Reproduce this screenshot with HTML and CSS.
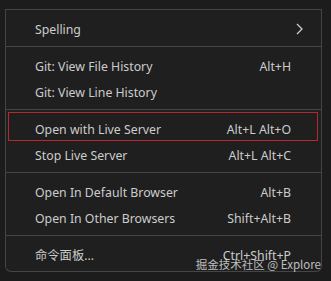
FILE: index.html
```html
<!DOCTYPE html>
<html>
<head>
<meta charset="utf-8">
<link rel="stylesheet" href="styles.css">
</head>
<body>
<div class="menu">
  <div class="sep first"></div>
  <div class="item"><span class="label">Spelling</span><span class="chev"><svg width="7" height="12" viewBox="0 0 7 12"><path d="M1 1 L6 6 L1 11" fill="none" stroke="#cccccc" stroke-width="1.3"/></svg></span></div>
  <div class="sep"></div>
  <div class="item"><span class="label">Git: View File History</span><span class="key">Alt+H</span></div>
  <div class="item"><span class="label">Git: View Line History</span></div>
  <div class="sep"></div>
  <div class="item marked"><span class="label">Open with Live Server</span><span class="key">Alt+L Alt+O</span><span class="mark"></span></div>
  <div class="item"><span class="label">Stop Live Server</span><span class="key">Alt+L Alt+C</span></div>
  <div class="sep"></div>
  <div class="item"><span class="label">Open In Default Browser</span><span class="key">Alt+B</span></div>
  <div class="item"><span class="label">Open In Other Browsers</span><span class="key">Shift+Alt+B</span></div>
  <div class="sep"></div>
  <div class="item"><span class="label">命令面板...</span><span class="key">Ctrl+Shift+P</span></div>
</div>
<div class="watermark">掘金技术社区 @ Explore</div>
</body>
</html>
```
FILE: styles.css
```css
html, body {
  margin: 0;
  padding: 0;
  background: #1c1c1c;
  width: 331px;
  height: 281px;
  overflow: hidden;
  font-family: "Noto Sans", "Noto Sans CJK SC", sans-serif;
  font-size: 12.3px;
  color: #cccccc;
}
.menu {
  margin-left: 5px;
  width: 315px;
  background: #1f1f1f;
  border: 1px solid #454545;
  border-top: none;
  border-radius: 0 0 6px 6px;
  padding-bottom: 3px;
}
.sep {
  height: 1px;
  background: #454545;
  margin: 4px 0 6px;
}
.sep.first {
  margin-top: 9px;
}
.item {
  position: relative;
  display: flex;
  align-items: center;
  justify-content: space-between;
  height: 26px;
  padding: 0 29px 0 29px;
}
.key {
  margin-right: 1px;
}
.chev {
  display: flex;
  margin-right: -11px;
}
.mark {
  position: absolute;
  left: 2px;
  right: 3px;
  top: -4px;
  height: 29px;
  box-sizing: border-box;
  border: 1px solid #b8262e;
}
.watermark {
  position: absolute;
  right: 10px;
  top: 256px;
  font-size: 11.5px;
  line-height: 16px;
  color: rgba(235, 235, 235, 0.78);
  font-family: "Noto Sans CJK SC", "Noto Sans", sans-serif;
}
```
